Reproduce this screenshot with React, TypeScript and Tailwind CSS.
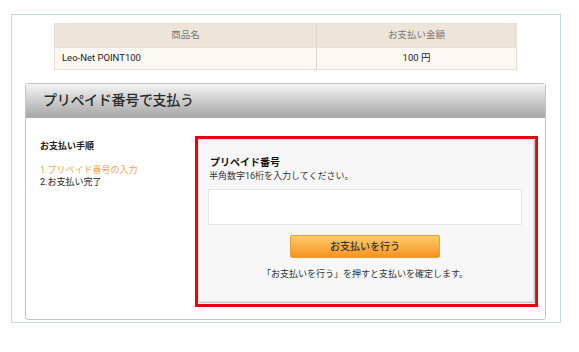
export default function App() {
  return (
    <div className="w-[579px] h-[352px] bg-white font-['Roboto','Noto_Sans_CJK_JP',sans-serif] text-[#333] pt-[14px] pl-[11px]">
      <div className="w-[550px] h-[309px] border border-[#c5d9e3] bg-white flex flex-col">
        {/* table */}
        <div className="ml-[42px] mt-[8px] w-[463px] border border-[#e6dfd3] flex flex-col">
          <div className="flex h-[23px] bg-[#eee5d8] text-[9.5px] text-[#777]">
            <div className="w-[262px] flex items-center justify-center border-r border-[#e0d7c8]">商品名</div>
            <div className="flex-1 flex items-center justify-center">お支払い金額</div>
          </div>
          <div className="flex h-[22px] bg-[#fbf8f3] text-[9.5px] text-[#222] border-t border-[#e6dfd3]">
            <div className="w-[262px] flex items-center pl-[7px] border-r border-[#e0d7c8]">Leo-Net POINT100</div>
            <div className="flex-1 flex items-center justify-center">100 円</div>
          </div>
        </div>
        {/* panel */}
        <div className="ml-[13px] mt-[13px] w-[521px] h-[237px] border border-[#c4c4c4] rounded-[3px] flex flex-col overflow-hidden">
          <div className="h-[34px] bg-gradient-to-b from-[#f5f5f5] to-[#a7a7a7] border-b border-[#b0b0b0] flex items-center pl-[17px]">
            <span className="text-[14px] font-medium text-[#2a2a2a] tracking-[-0.3px]">プリペイド番号で支払う</span>
          </div>
          <div className="flex flex-1 pt-[18px]">
            <div className="w-[169px] pl-[14px] pt-[4px] flex flex-col">
              <div className="text-[9px] font-bold leading-[13px] text-[#222]">お支払い手順</div>
              <div className="mt-[11px] text-[9px] leading-[12px] text-[#f4a356]">1.プリペイド番号の入力</div>
              <div className="text-[9px] leading-[12px] text-[#222]">2.お支払い完了</div>
            </div>
            <div className="w-[343px] h-[171px] border-[3px] border-[#e30613] flex">
              <div className="flex-1 bg-[#f7f7f7] border border-[#e2e2e2] shadow-[1px_1px_1px_#c8c8c8] mr-[1px] mb-[2px] flex flex-col pl-[9px] pr-[11px] pt-[16px]">
                <div className="pl-[2px] text-[10px] font-bold leading-[14px] text-[#111]">プリペイド番号</div>
                <div className="pl-[1px] text-[9px] leading-[13px] text-[#333]">半角数字16桁を入力してください。</div>
                <div className="mt-[6px] h-[36px] bg-white border border-[#e6e6e6]"></div>
                <div className="mt-[10px] flex justify-center">
                  <div className="w-[150px] h-[23px] rounded-[2px] border border-[#e3a13c] bg-gradient-to-b from-[#fdcb66] to-[#f7931c] flex items-center justify-center text-[10px] font-medium text-[#333]">
                    お支払いを行う
                  </div>
                </div>
                <div className="mt-[10px] text-center text-[9px] leading-[13px] text-[#333]">「お支払いを行う」を押すと支払いを確定します。</div>
              </div>
            </div>
          </div>
        </div>
      </div>
    </div>
  );
}
